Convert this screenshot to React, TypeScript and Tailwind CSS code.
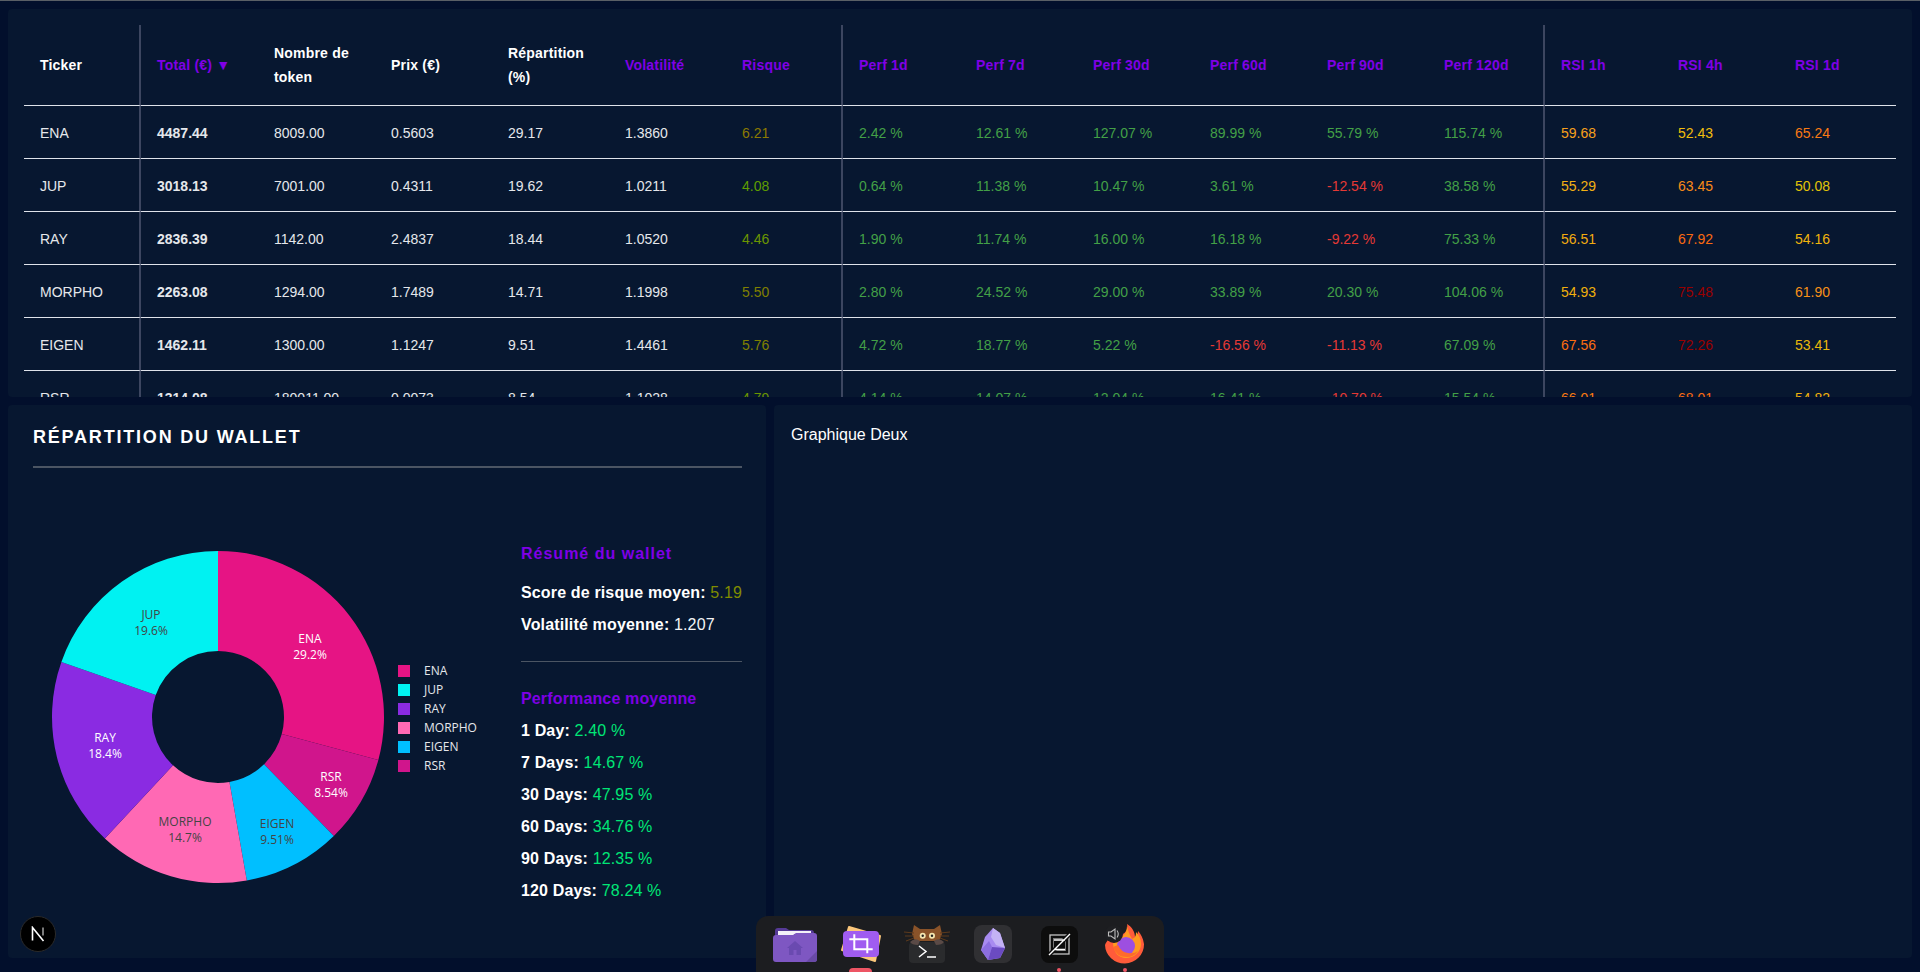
import React from 'react';

const sans = 'font-["Liberation_Sans",Arial,sans-serif]';

interface Row {
  ticker: string;
  total: string;
  tokens: string;
  price: string;
  share: string;
  vol: string;
  risk: string;
  riskColor: string;
  perfs: string[];
  rsi: [string, string][];
}

const rows: Row[] = [
  {
    ticker: 'ENA', total: '4487.44', tokens: '8009.00', price: '0.5603', share: '29.17', vol: '1.3860',
    risk: '6.21', riskColor: 'text-[#8c7a00]',
    perfs: ['2.42 %', '12.61 %', '127.07 %', '89.99 %', '55.79 %', '115.74 %'],
    rsi: [['59.68', 'text-[#f7a01c]'], ['52.43', 'text-[#f2bd0c]'], ['65.24', 'text-[#f97a14]']],
  },
  {
    ticker: 'JUP', total: '3018.13', tokens: '7001.00', price: '0.4311', share: '19.62', vol: '1.0211',
    risk: '4.08', riskColor: 'text-[#5f9e00]',
    perfs: ['0.64 %', '11.38 %', '10.47 %', '3.61 %', '-12.54 %', '38.58 %'],
    rsi: [['55.29', 'text-[#f2b014]'], ['63.45', 'text-[#f98a18]'], ['50.08', 'text-[#e2c408]']],
  },
  {
    ticker: 'RAY', total: '2836.39', tokens: '1142.00', price: '2.4837', share: '18.44', vol: '1.0520',
    risk: '4.46', riskColor: 'text-[#6b9600]',
    perfs: ['1.90 %', '11.74 %', '16.00 %', '16.18 %', '-9.22 %', '75.33 %'],
    rsi: [['56.51', 'text-[#f2ab10]'], ['67.92', 'text-[#fb6a10]'], ['54.16', 'text-[#f0b40c]']],
  },
  {
    ticker: 'MORPHO', total: '2263.08', tokens: '1294.00', price: '1.7489', share: '14.71', vol: '1.1998',
    risk: '5.50', riskColor: 'text-[#808000]',
    perfs: ['2.80 %', '24.52 %', '29.00 %', '33.89 %', '20.30 %', '104.06 %'],
    rsi: [['54.93', 'text-[#f0b00c]'], ['75.48', 'text-[#990000]'], ['61.90', 'text-[#f79018]']],
  },
  {
    ticker: 'EIGEN', total: '1462.11', tokens: '1300.00', price: '1.1247', share: '9.51', vol: '1.4461',
    risk: '5.76', riskColor: 'text-[#808000]',
    perfs: ['4.72 %', '18.77 %', '5.22 %', '-16.56 %', '-11.13 %', '67.09 %'],
    rsi: [['67.56', 'text-[#fb6c10]'], ['72.26', 'text-[#990000]'], ['53.41', 'text-[#e8b80a]']],
  },
  {
    ticker: 'RSR', total: '1314.08', tokens: '180011.00', price: '0.0073', share: '8.54', vol: '1.1028',
    risk: '4.79', riskColor: 'text-[#6b9600]',
    perfs: ['4.14 %', '14.07 %', '12.04 %', '16.41 %', '-10.70 %', '15.54 %'],
    rsi: [['66.01', 'text-[#fb7a10]'], ['68.01', 'text-[#fb6a10]'], ['54.82', 'text-[#f0b00c]']],
  },
];

// clockwise from the top, label positions are relative to the chart's svg
const slices = [
  { name: 'ENA', pct: 29.17, color: '#e61484', label: '29.2%', lx: 302, ly: 123, dark: false },
  { name: 'RSR', pct: 8.54, color: '#d0158c', label: '8.54%', lx: 323, ly: 261, dark: false },
  { name: 'EIGEN', pct: 9.51, color: '#00bfff', label: '9.51%', lx: 269, ly: 308, dark: true },
  { name: 'MORPHO', pct: 14.71, color: '#ff69b4', label: '14.7%', lx: 177, ly: 306, dark: true },
  { name: 'RAY', pct: 18.44, color: '#8a2be2', label: '18.4%', lx: 97, ly: 222, dark: false },
  { name: 'JUP', pct: 19.62, color: '#00f2f2', label: '19.6%', lx: 143, ly: 99, dark: true },
];

const legend = [
  { name: 'ENA', swatch: 'bg-[#e61484]' },
  { name: 'JUP', swatch: 'bg-[#00f2f2]' },
  { name: 'RAY', swatch: 'bg-[#8a2be2]' },
  { name: 'MORPHO', swatch: 'bg-[#ff69b4]' },
  { name: 'EIGEN', swatch: 'bg-[#00bfff]' },
  { name: 'RSR', swatch: 'bg-[#d0158c]' },
];

function donutPath(start: number, end: number) {
  const cx = 210;
  const cy = 197;
  const R = 166;
  const r = 66;
  const pt = (rad: number, t: number) => {
    const a = (t / 100) * Math.PI * 2;
    return `${cx + rad * Math.sin(a)} ${cy - rad * Math.cos(a)}`;
  };
  const large = end - start > 50 ? 1 : 0;
  return `M${pt(R, start)} A${R} ${R} 0 ${large} 1 ${pt(R, end)} L${pt(r, end)} A${r} ${r} 0 ${large} 0 ${pt(r, start)} Z`;
}

function Donut() {
  let acc = 0;
  const total = slices.reduce((s, x) => s + x.pct, 0);
  return (
    <svg width="394" height="400" viewBox="0 0 394 400" className="shrink-0">
      {slices.map((s) => {
        const start = acc;
        acc += (s.pct / total) * 100;
        return <path key={s.name} d={donutPath(start, acc)} fill={s.color} />;
      })}
      {slices.map((s) => (
        <text
          key={s.name}
          x={s.lx}
          y={s.ly}
          textAnchor="middle"
          fontFamily="'Open Sans', 'Noto Sans', sans-serif"
          fontSize="12"
          fill={s.dark ? '#444' : '#fff'}
        >
          <tspan x={s.lx} dy="0">{s.name}</tspan>
          <tspan x={s.lx} dy="16">{s.label}</tspan>
        </text>
      ))}
    </svg>
  );
}

function Th({ children, purple, border }: { children: React.ReactNode; purple?: boolean; border?: boolean }) {
  return (
    <th
      className={`px-4 py-4 text-left align-middle text-sm leading-6 font-bold tracking-[0.2px] border-b border-b-[#dfe3ea] ${
        purple ? 'text-[#7f00e6]' : 'text-white'
      } ${border ? 'border-r-2 border-r-[#3c4660]' : ''}`}
    >
      {children}
    </th>
  );
}

function Td({ children, className = '', border }: { children: React.ReactNode; className?: string; border?: boolean }) {
  return (
    <td
      className={`h-[53px] px-4 pt-[2px] pb-0 text-left text-sm leading-[21px] border-b border-b-[#dfe3ea] ${className} ${
        border ? 'border-r-2 border-r-[#3c4660]' : ''
      }`}
    >
      {children}
    </td>
  );
}

function PortfolioTable() {
  return (
    <table className="w-[1872px] table-fixed border-separate border-spacing-0">
      <thead>
        <tr>
          <Th border>Ticker</Th>
          <Th purple>Total (€) ▼</Th>
          <Th>Nombre de token</Th>
          <Th>Prix (€)</Th>
          <Th>Répartition (%)</Th>
          <Th purple>Volatilité</Th>
          <Th purple border>Risque</Th>
          <Th purple>Perf 1d</Th>
          <Th purple>Perf 7d</Th>
          <Th purple>Perf 30d</Th>
          <Th purple>Perf 60d</Th>
          <Th purple>Perf 90d</Th>
          <Th purple border>Perf 120d</Th>
          <Th purple>RSI 1h</Th>
          <Th purple>RSI 4h</Th>
          <Th purple>RSI 1d</Th>
        </tr>
      </thead>
      <tbody>
        {rows.map((row) => (
          <tr key={row.ticker} className="text-[#e5e7eb]">
            <Td border>{row.ticker}</Td>
            <Td className="font-bold">{row.total}</Td>
            <Td>{row.tokens}</Td>
            <Td>{row.price}</Td>
            <Td>{row.share}</Td>
            <Td>{row.vol}</Td>
            <Td className={row.riskColor} border>{row.risk}</Td>
            {row.perfs.map((p, i) => (
              <Td key={i} border={i === 5} className={p.startsWith('-') ? 'text-[#e53935]' : 'text-[#43a047]'}>
                {p}
              </Td>
            ))}
            {row.rsi.map(([v, color]) => (
              <Td key={v} className={color}>{v}</Td>
            ))}
          </tr>
        ))}
      </tbody>
    </table>
  );
}

const averages = [
  ['1 Day:', '2.40 %'],
  ['7 Days:', '14.67 %'],
  ['30 Days:', '47.95 %'],
  ['60 Days:', '34.76 %'],
  ['90 Days:', '12.35 %'],
  ['120 Days:', '78.24 %'],
];

function WalletSummary() {
  return (
    <div className="w-[221px] shrink-0 whitespace-nowrap text-base leading-6 tracking-[0.15px] text-[#f3f4f6]">
      <h3 className="mb-[15px] font-bold tracking-[1px] text-[#7f00e6]">Résumé du wallet</h3>
      <p className="mb-2"><b className="text-white">Score de risque moyen:</b> <span className="text-[#808c00]">5.19</span></p>
      <p><b className="text-white">Volatilité moyenne:</b> 1.207</p>
      <hr className="mt-[24px] mb-[25px] border-t border-[#4b5563]" />
      <h3 className="mb-2 font-bold text-[#7f00e6]">Performance moyenne</h3>
      {averages.map(([k, v]) => (
        <p key={k} className="mb-2"><b className="text-white">{k}</b> <span className="text-[#00e676]">{v}</span></p>
      ))}
    </div>
  );
}

function FolderIcon() {
  return (
    <svg width="44" height="35" viewBox="0 0 44 35">
      <path d="M2 4a3 3 0 0 1 3-3h8l3 2h22a3 3 0 0 1 3 3v8H2z" fill="#553a96" />
      <path d="M5 4h33v3H21v2H5z" fill="#f4f2f8" />
      <path d="M0 11a3 3 0 0 1 3-3h17l3-2h18a3 3 0 0 1 3 3v23a3 3 0 0 1-3 3H3a3 3 0 0 1-3-3z" fill="#7e57c2" />
      <path d="M22 14l-8 7h2v7h4.500v-5h3v5H28v-7h2z" fill="#6a4ab0" />
      <path d="M44 24v8a3 3 0 0 1-3 3h-8z" fill="#694aa6" />
    </svg>
  );
}

function CropIcon() {
  return (
    <svg width="42" height="38" viewBox="0 0 42 38">
      <path d="M9 2l31 9-5 25L2 25z" fill="#fbc77b" stroke="#fbc77b" strokeWidth="2" strokeLinejoin="round" />
      <rect x="3" y="6" width="36" height="26" rx="4" fill="#a05cf0" />
      <path d="M14.300 9.300v15h18.400M9.300 14.300h18v14" fill="none" stroke="#fff" strokeWidth="2" />
    </svg>
  );
}

function TerminalIcon() {
  return (
    <svg width="46" height="38" viewBox="0 0 46 38">
      <rect x="5" y="17" width="36" height="21" rx="4" fill="#2a2b2d" />
      <path d="M10 0l6 4h14l6-4 2 9-3 7H11l-3-7z" fill="#8a5329" />
      <circle cx="18.700" cy="10.700" r="3" fill="#f5e6b0" />
      <circle cx="28" cy="10.700" r="3" fill="#f5e6b0" />
      <circle cx="18.700" cy="10.700" r="1.200" fill="#222" />
      <circle cx="28" cy="10.700" r="1.200" fill="#222" />
      <path d="M10 8L0 7M10 11L1 11M10 13l-8 3M36 8l10-1M36 11l9 0M36 13l8 3" stroke="#5d3a1c" strokeWidth="1" />
      <path d="M6 17q5-5 10-1l-2 4q-6 0-8-3zM40 17q-5-5-10-1l2 4q6 0 8-3z" fill="#5a4a46" />
      <path d="M15 21l7 5.500-7 5.500" fill="none" stroke="#fff" strokeWidth="1.500" />
      <path d="M23 32h9" stroke="#fff" strokeWidth="1.500" />
    </svg>
  );
}

function ObsidianIcon() {
  return (
    <svg width="38" height="38" viewBox="0 0 38 38">
      <rect width="38" height="38" rx="8" fill="#303033" />
      <path d="M19 3l7 5 5 15-5 10-12 2-7-10 4-13z" fill="#a88bf0" />
      <path d="M19 3l7 5 5 15-9-3-5-8z" fill="#c4b2f5" />
      <path d="M7 25l8-9 3 6-4 13z" fill="#8c6ee0" />
      <path d="M14 35l4-13 13 1-5 10z" fill="#6b4bc2" />
    </svg>
  );
}

function ZedIcon() {
  return (
    <svg width="37" height="37" viewBox="0 0 37 37">
      <rect width="37" height="37" rx="8" fill="#0d0d0d" />
      <rect x="9" y="9" width="19" height="19" fill="none" stroke="#c4c4c4" strokeWidth="1.300" />
      <rect x="12.500" y="12.500" width="12" height="12" fill="none" stroke="#777" strokeWidth="1" />
      <path d="M30 7L7 30" stroke="#0d0d0d" strokeWidth="4" />
      <path d="M13 14h11M29 8L8 29M13 23.500h11" fill="none" stroke="#fff" strokeWidth="1.400" />
    </svg>
  );
}

function FirefoxIcon() {
  return (
    <svg width="40" height="40" viewBox="0 0 40 40">
      <path d="M0 21a19.500 19 0 1 0 39-1c-1-6-3-10-6-13 0 3-1 5-3 6 0-5-3-10-8-13 1 5-1 8-4 10-3 1-14 1-18 11z" fill="#ff5b3a" />
      <path d="M8 20c1 9 6 14 13 14 8 0 15-6 15-14 0-5-2-9-5-12 0 4-1 6-4 7-3-5-4-9-5-13 0 5-2 8-4 10-3 2-8 3-10 8z" fill="#ff9a1f" />
      <circle cx="21" cy="22" r="9" fill="#9d4fe0" />
      <path d="M8 23q3 10 14 10 7 0 11-6-4 3-10 2-7-1-10-8z" fill="#ff6a2c" />
      <circle cx="9" cy="10" r="9" fill="#1e1f22" />
      <path d="M3.500 8h2.500l4-3v10l-4-3H3.500zM12 6.500q2.500 3.500 0 7" fill="none" stroke="#bdbdbd" strokeWidth="1.100" />
    </svg>
  );
}

const dockIcons = [FolderIcon, CropIcon, TerminalIcon, ObsidianIcon, ZedIcon, FirefoxIcon];

function Dock() {
  return (
    <div className="fixed bottom-0 left-[756px] flex h-[56px] w-[408px] items-center rounded-t-xl bg-[#1c1d20] px-[6px]">
      {dockIcons.map((Icon, i) => (
        <div key={i} className="flex w-[66px] justify-center">
          <Icon />
        </div>
      ))}
      <span className="absolute bottom-0 left-[93px] h-[4px] w-[23px] rounded-t-sm bg-[#ed5564]" />
      <span className="absolute bottom-0 left-[301px] size-[4px] rounded-full bg-[#ed5564]" />
      <span className="absolute bottom-0 left-[367px] size-[4px] rounded-full bg-[#ed5564]" />
    </div>
  );
}

function NextBadge() {
  return (
    <div className="fixed bottom-[20px] left-[20px] flex size-[36px] items-center justify-center rounded-full border border-[#2a2a2a] bg-black">
      <svg width="16" height="16" viewBox="0 0 16 16">
        <path d="M2.500 14.500v-13l11 13.500" fill="none" stroke="#fff" strokeWidth="1.600" />
        <path d="M13 1.500v8" fill="none" stroke="#999" strokeWidth="1.600" />
      </svg>
    </div>
  );
}

export default function App() {
  return (
    <div className={`${sans} flex h-[972px] w-full flex-col gap-2 overflow-hidden border-t border-t-[#5a5f66] bg-[#020f2c] px-2 pt-2 pb-[14px] text-white`}>
      <section className="h-[388px] shrink-0 overflow-hidden rounded bg-[#071730] px-4 pt-4">
        <PortfolioTable />
      </section>
      <div className="flex min-h-0 flex-1 gap-2">
        <section className="w-[758px] shrink-0 rounded bg-[#071730] pr-[24px] pl-[25px]">
          <h2 className="pt-[21px] pb-[18px] text-lg leading-[22px] font-bold tracking-[1.8px] uppercase">Répartition du wallet</h2>
          <hr className="border-t-2 border-[#4b5563]" />
          <div className="flex">
            <div className="-ml-[25px] mt-[52px]"><Donut /></div>
            <div className="mt-[193px] -ml-[4px] flex w-[96px] shrink-0 flex-col">
              {legend.map((item) => (
                <div key={item.name} className="flex h-[19px] items-center gap-[14px] font-['Open_Sans','Noto_Sans',sans-serif] text-xs text-[#e5e7eb]">
                  <span className={`size-3 ${item.swatch}`} />
                  {item.name}
                </div>
              ))}
            </div>
            <div className="mt-[74px] ml-[27px]"><WalletSummary /></div>
          </div>
        </section>
        <section className="flex-1 rounded bg-[#071730] p-[17px] pt-[18px] text-base leading-6">Graphique Deux</section>
      </div>
      <NextBadge />
      <Dock />
    </div>
  );
}
